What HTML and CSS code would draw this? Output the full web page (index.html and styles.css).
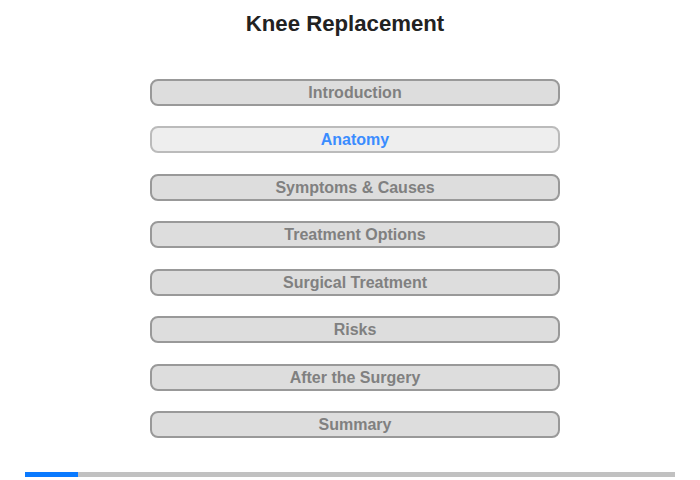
FILE: index.html
```html
<!DOCTYPE html>
<html>
<head>
<meta charset="utf-8">
<link rel="stylesheet" href="styles.css">
</head>
<body>
<div class="page">
  <h1 class="title">Knee Replacement</h1>
  <nav class="menu">
    <div class="item">Introduction</div>
    <div class="item active">Anatomy</div>
    <div class="item">Symptoms &amp; Causes</div>
    <div class="item">Treatment Options</div>
    <div class="item">Surgical Treatment</div>
    <div class="item">Risks</div>
    <div class="item">After the Surgery</div>
    <div class="item">Summary</div>
  </nav>
  <div class="progress"><div class="progress-fill" style="width:53px"></div></div>
</div>
</body>
</html>
```

FILE: styles.css
```css
html, body {
  margin: 0;
  padding: 0;
  background: #fff;
}
.page {
  width: 700px;
  height: 480px;
  font-family: "Liberation Sans", Arial, sans-serif;
  display: flex;
  flex-direction: column;
}
.title {
  margin: 0;
  padding-top: 10px;
  height: 79px;
  flex: none;
  box-sizing: border-box;
  text-align: center;
  font-size: 22.2px;
  line-height: 28px;
  font-weight: bold;
  color: #222;
  padding-right: 10px;
}
.menu {
  display: flex;
  flex-direction: column;
  gap: 20.45px;
  margin-left: 150px;
  width: 410px;
}
.item {
  box-sizing: border-box;
  height: 27px;
  border: 2px solid #999;
  border-radius: 8px;
  background: #ddd;
  color: #808080;
  font-size: 16px;
  font-weight: bold;
  line-height: 23px;
  text-align: center;
}
.item.active {
  background: #eee;
  border-color: #bbb;
  color: #3a8cff;
}
.progress {
  margin: 34px 0 0 25px;
  width: 650px;
  height: 5px;
  background: #c1c1c1;
}
.progress-fill {
  height: 100%;
  background: #0a7aff;
}
```
